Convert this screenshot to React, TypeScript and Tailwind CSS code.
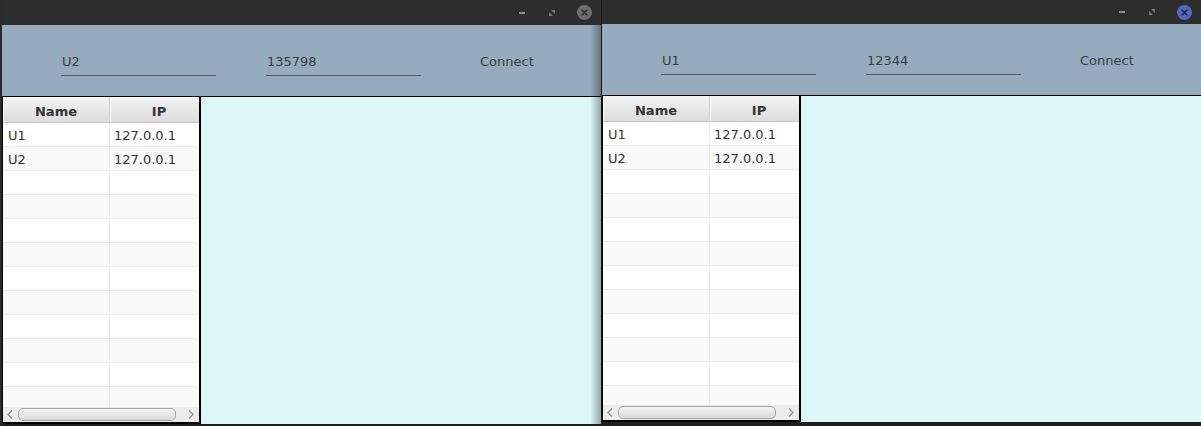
const FONT = { fontFamily: '"DejaVu Sans", "Liberation Sans", sans-serif' };

interface Peer {
  name: string;
  ip: string;
}

const PEERS: Peer[] = [
  { name: "U1", ip: "127.0.0.1" },
  { name: "U2", ip: "127.0.0.1" },
];

function TitleBar({ active, tall }: { active: boolean; tall: boolean }) {
  return (
    <div
      className={`flex shrink-0 items-center justify-end bg-[#2d2d2d] pr-[9px] ${tall ? "h-[25px]" : "h-[24px]"}`}
    >
      {/* minimize */}
      <div className="mr-[24px] h-[2px] w-[6px] bg-[#8c8c8c]" />
      {/* restore */}
      <svg width="6" height="6" viewBox="0 0 6 6" className="mr-[22px]">
        <path d="M2 0H6V4Z" fill="#7a7a7a" />
        <path d="M0 2V6H4Z" fill="#7a7a7a" />
      </svg>
      {/* close */}
      <div
        className={`flex h-[15px] w-[15px] items-center justify-center rounded-full ${active ? "bg-[#5568bf]" : "bg-[#6e6e6e]"}`}
      >
        <svg width="7" height="7" viewBox="0 0 7 7">
          <path
            d="M1 1L6 6M6 1L1 6"
            stroke={active ? "#1f2747" : "#2e2e2e"}
            strokeWidth="1.6"
            strokeLinecap="round"
          />
        </svg>
      </div>
    </div>
  );
}

function Field({ value }: { value: string }) {
  return (
    <div className="w-[155px] border-b border-[#565a60] pb-[5px] pl-[1px] leading-[16px]">
      {value}
    </div>
  );
}

function Scrollbar() {
  return (
    <div className="flex h-[15px] shrink-0 items-center bg-[#ececec] px-[4px]">
      <svg width="6" height="9" viewBox="0 0 6 9" className="mr-[5px]">
        <path d="M5 0.5L1 4.5L5 8.5" stroke="#8e8e8e" strokeWidth="1.2" fill="none" />
      </svg>
      <div className="h-[13px] w-[158px] rounded-[5px] border border-[#a6a6a6] bg-gradient-to-b from-[#f4f4f4] to-[#d9d9d9]" />
      <svg width="6" height="9" viewBox="0 0 6 9" className="ml-auto mr-[1px]">
        <path d="M1 0.5L5 4.5L1 8.5" stroke="#8e8e8e" strokeWidth="1.2" fill="none" />
      </svg>
    </div>
  );
}

function PeerTable() {
  const rows = Array.from({ length: 12 }, (_, i) => PEERS[i]);
  return (
    <div className="flex w-[199px] shrink-0 flex-col overflow-hidden border-b-2 border-l border-r-2 border-black bg-white">
      <div className="flex h-[26px] shrink-0 border-b border-[#c6c6c6] bg-gradient-to-b from-[#f4f4f4] to-[#dcdcdc] font-bold">
        <div className="w-[107px] shrink-0 border-r border-[#c9c9c9] pt-[7px] text-center leading-[16px] shadow-[inset_1px_0_0_#fff]">
          Name
        </div>
        <div className="w-[98px] shrink-0 pt-[7px] text-center leading-[16px] shadow-[inset_1px_0_0_#fff]">
          IP
        </div>
      </div>
      <div className="flex-1 overflow-hidden">
        {rows.map((r, i) => (
          <div
            key={i}
            className={`flex h-[24px] border-b border-[#ececec] ${i % 2 === 0 ? "bg-white" : "bg-[#f9f9f9]"}`}
          >
            <div className="w-[107px] shrink-0 border-r border-[#ececec] pl-[5px] pt-[2px] leading-[21px]">
              {r?.name}
            </div>
            <div className="w-[98px] shrink-0 pl-[4px] pt-[2px] leading-[21px]">{r?.ip}</div>
          </div>
        ))}
      </div>
      <Scrollbar />
    </div>
  );
}

function ChatWindow({
  name,
  code,
  active,
  tall,
}: {
  name: string;
  code: string;
  active: boolean;
  tall: boolean;
}) {
  return (
    <div className={`flex flex-col ${tall ? "h-[424px]" : "h-[422px]"}`}>
      <TitleBar active={active} tall={tall} />
      <div className="flex h-[71px] shrink-0 items-start bg-[#96acbe] pl-[59px] pt-[29px] text-[#3a3d42]">
        <Field value={name} />
        <div className="ml-[50px]">
          <Field value={code} />
        </div>
        <div className="ml-[59px] leading-[16px]">Connect</div>
      </div>
      <div className="flex min-h-0 flex-1 border-t border-black">
        <PeerTable />
        <div className="flex-1 bg-[#ddf7f8]" />
      </div>
    </div>
  );
}

export default function App() {
  return (
    <div
      className="flex h-[426px] w-[1201px] overflow-hidden bg-[#1e1e1e] text-[13px] text-[#333]"
      style={FONT}
    >
      <div className="w-[601px] shrink-0 border-l-2 border-[#2a2a2a]">
        <ChatWindow name="U2" code="135798" active={false} tall />
      </div>
      <div className="relative w-[600px] shrink-0 border-l border-[#1c1c1c]">
        <div className="pointer-events-none absolute right-full top-[25px] h-[399px] w-[12px] bg-gradient-to-r from-transparent to-black/35" />
        <ChatWindow name="U1" code="12344" active tall={false} />
      </div>
    </div>
  );
}
